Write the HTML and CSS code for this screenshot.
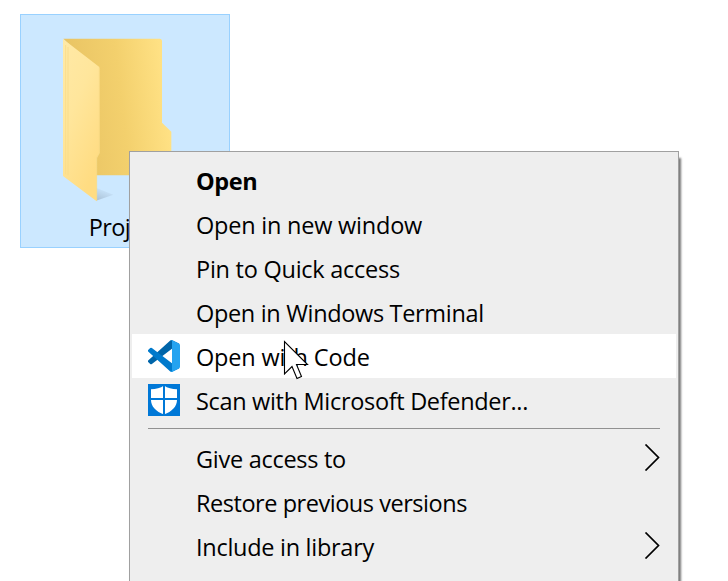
FILE: index.html
```html
<!DOCTYPE html>
<html lang="en">
<head>
<meta charset="utf-8">
<title>Folder context menu</title>
<link rel="stylesheet" href="styles.css">
</head>
<body>
<main class="desktop">
  <div class="folder">
    <svg class="folder-art" viewBox="30 27 630 600" aria-hidden="true">
      <defs>
        <linearGradient id="back" x1="0" y1=".25" x2="1" y2="0.1">
          <stop offset="0" stop-color="#e8c363"/><stop offset=".5" stop-color="#f3d06d"/><stop offset=".9" stop-color="#ffe184"/>
        </linearGradient>
        <linearGradient id="flap" x1="0" y1="0" x2=".5" y2="1">
          <stop offset="0" stop-color="#ffe9a6"/><stop offset=".45" stop-color="#ffe69c"/><stop offset="1" stop-color="#ffdc82"/>
        </linearGradient>
        <linearGradient id="shade" x1="0" y1="1" x2=".5" y2="0">
          <stop offset="0" stop-color="#a9c0d6"/><stop offset="1" stop-color="#cce8ff"/>
        </linearGradient>
      </defs>
      <path fill="url(#shade)" d="M258 548 310 569 258 587Z"/>
      <path fill="url(#back)" d="M160 101H449Q456 101 456 109V353L484 380V511H240V180Z"/>
      <path fill="url(#flap)" d="M159 102 268 186V444L260 459V589L159 513Z"/>
      <path fill="none" stroke="#f8db88" stroke-width="2.5" d="M167 120V508M174 126V511M268 188V444L260 459V587"/>
    </svg>
    <span class="folder-name">Project</span>
  </div>

  <ul class="menu">
    <li class="item item-default"><span class="label l-open">Open</span></li>
    <li class="item"><span class="label l-window">Open in new window</span></li>
    <li class="item"><span class="label l-pin">Pin to Quick access</span></li>
    <li class="item"><span class="label l-terminal">Open in Windows Terminal</span></li>
    <li class="item item-hover">
      <svg class="icon" viewBox="0 0 100 100" aria-hidden="true">
        <path fill="#0065a9" d="M96.46 10.8 75.86.88A6.23 6.23 0 0 0 68.75 2.08L1.3 63.58a4.17 4.17 0 0 0 0 6.17l5.51 5a4.17 4.17 0 0 0 5.32.24L93.36 13.37C96.09 11.3 100 13.25 100 16.67v-.24a6.25 6.25 0 0 0-3.54-5.63Z"/>
        <path fill="#007acc" d="m96.46 89.2-20.6 9.92a6.23 6.23 0 0 1-7.11-1.2L1.3 36.42a4.17 4.17 0 0 1 0-6.17l5.51-5a4.17 4.17 0 0 1 5.32-.24l81.23 61.62C96.09 88.7 100 86.75 100 83.33v.24a6.25 6.25 0 0 1-3.54 5.63Z"/>
        <path fill="#24a3f0" d="M75.86 99.13a6.23 6.23 0 0 1-7.11-1.21C71.06 100.22 75 98.59 75 95.33V4.67C75 1.41 71.06-.22 68.75 2.08A6.23 6.23 0 0 1 75.86.87l20.6 9.91A6.25 6.25 0 0 1 100 16.41v67.18a6.25 6.25 0 0 1-3.54 5.63Z"/>
      </svg>
      <span class="label l-code">Open with Code</span>
    </li>
    <li class="item">
      <svg class="icon" viewBox="0 0 32 32" aria-hidden="true">
        <path fill="#0078d7" d="M0 0h32v32H0z"/>
        <path fill="#fff" d="M16 1.5C12.5 4 8 5.2 3 5.2V16C3 22.5 8 27.5 16 30.5 24 27.5 29 22.5 29 16V5.2C24 5.2 19.5 4 16 1.5Z"/>
        <path stroke="#0078d7" stroke-width="2" d="M16 0v32M0 15h32"/>
      </svg>
      <span class="label l-scan">Scan with Microsoft Defender...</span>
    </li>
    <li class="divider" role="separator"></li>
    <li class="item">
      <span class="label l-give">Give access to</span>
      <svg class="arrow" viewBox="0 0 16 27" aria-hidden="true"><path d="m1.5.5 13 13-13 13"/></svg>
    </li>
    <li class="item"><span class="label l-restore">Restore previous versions</span></li>
    <li class="item">
      <span class="label l-library">Include in library</span>
      <svg class="arrow" viewBox="0 0 16 27" aria-hidden="true"><path d="m1.5.5 13 13-13 13"/></svg>
    </li>
  </ul>

  <svg class="cursor" viewBox="0 0 28 40" aria-hidden="true">
    <path d="M1.5 1.5V34L9 26.5 14 38.5 18.5 36.5 13.5 24.5H24.5Z"/>
  </svg>
</main>
</body>
</html>
```

FILE: styles.css
```css
* {
  box-sizing: border-box;
}

body {
  margin: 0;
  background: #fff;
  color: #000;
  font-family: "Open Sans", "Noto Sans", sans-serif;
  font-size: 23.5px;
}

.desktop {
  position: relative;
  height: 581px;
  padding: 14px 20px;
  overflow: hidden;
}

.folder {
  display: flex;
  flex-direction: column;
  align-items: center;
  width: 210px;
  height: 234px;
  border: 1px solid #99d1ff;
  background: #cce8ff;
}

.folder-art {
  flex: none;
  width: 210px;
  height: 200px;
  margin: -1px;
}

.folder-name {
  line-height: 28px;
  letter-spacing: -0.6px;
}

.menu {
  position: absolute;
  top: 151px;
  left: 129px;
  width: 550px;
  height: 460px;
  margin: 0;
  padding: 6px 2px;
  list-style: none;
  border: 1px solid #a0a0a0;
  background: #eee;
  box-shadow: 2px 7px 2px #777;
}

.item {
  display: grid;
  grid-template-columns: 32px 1fr 16px;
  column-gap: 16px;
  align-items: center;
  height: 44px;
  padding: 0 16px;
}

.item-default {
  font-weight: 700;
}

.item-hover {
  background: #fff;
}

.icon {
  width: 32px;
  height: 32px;
}

.label {
  grid-column: 2;
  grid-row: 1;
  justify-self: start;
  padding-top: 2px;
  line-height: 42px;
  white-space: nowrap;
}

.l-open { letter-spacing: -0.4px; }
.l-window { letter-spacing: -0.22px; }
.l-pin { letter-spacing: -0.25px; }
.l-terminal { letter-spacing: -0.33px; }
.l-code { letter-spacing: -0.16px; }
.l-scan { letter-spacing: -0.32px; }
.l-give { letter-spacing: -0.28px; }
.l-restore { letter-spacing: -0.46px; }
.l-library { letter-spacing: -0.28px; }

.arrow {
  grid-column: 3;
  width: 16px;
  height: 27px;
  margin-bottom: 1px;
  fill: none;
  stroke: #000;
  stroke-width: 1.7;
}

.divider {
  height: 1px;
  margin: 6px 16px 7px;
  background: #919191;
}

.cursor {
  position: absolute;
  top: 340px;
  left: 283px;
  width: 28px;
  height: 40px;
  fill: #fff;
  stroke: #000;
  stroke-width: 1.1;
}
```
